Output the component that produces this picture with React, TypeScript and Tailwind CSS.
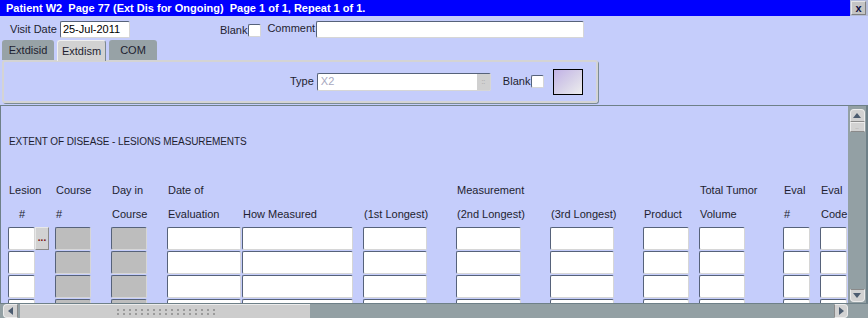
import React from "react";

const font = { fontFamily: '"Liberation Sans", Arial, sans-serif' };

type Col = {
  box: string;
  h1: string;
  h2: string;
  h2pad?: string;
  kind: "white" | "gray" | "btn";
};

const cols: Col[] = [
  { box: "ml-[8px] w-[27px]", h1: "Lesion", h2: "#", h2pad: "pl-[11px]", kind: "white" },
  { box: "w-[14px]", h1: "", h2: "", kind: "btn" },
  { box: "ml-[6px] w-[36px]", h1: "Course", h2: "#", kind: "gray" },
  { box: "ml-[20px] w-[36px]", h1: "Day in", h2: "Course", kind: "gray" },
  { box: "ml-[20px] w-[74px]", h1: "Date of", h2: "Evaluation", kind: "white" },
  { box: "ml-[1px] w-[111px]", h1: "", h2: "How Measured", kind: "white" },
  { box: "ml-[10px] w-[64px]", h1: "", h2: "(1st Longest)", kind: "white" },
  { box: "ml-[29px] w-[65px]", h1: "Measurement", h2: "(2nd Longest)", kind: "white" },
  { box: "ml-[29px] w-[64px]", h1: "", h2: "(3rd Longest)", kind: "white" },
  { box: "ml-[29px] w-[46px]", h1: "", h2: "Product", kind: "white" },
  { box: "ml-[10px] w-[46px]", h1: "Total Tumor", h2: "Volume", kind: "white" },
  { box: "ml-[38px] w-[27px]", h1: "Eval", h2: "#", kind: "white" },
  { box: "ml-[10px] w-[27px]", h1: "Eval", h2: "Code", kind: "white" },
];

const sunken =
  "border border-t-[#56627a] border-l-[#56627a] border-b-[#d6d6d6] border-r-[#d6d6d6] rounded-[2px]";

function Check() {
  return <div className={"w-[13px] h-[13px] bg-white " + sunken} />;
}

function Cell({ kind, first }: { kind: Col["kind"]; first: boolean }) {
  if (kind === "btn") {
    if (!first) return <div className="h-[23px] mb-[1px]" />;
    return (
      <div className="h-[23px] mb-[1px] bg-[#d2d2d2] border border-[#e8e8e8] border-b-[#8a8a8a] border-r-[#8a8a8a] flex items-center justify-center text-[10px] font-bold text-[#7a1010] leading-none pb-[2px]">
        ...
      </div>
    );
  }
  if (kind === "gray") {
    return <div className={"h-[23px] mb-[1px] bg-[#bdbdbd] " + sunken} />;
  }
  return <div className={"h-[23px] mb-[1px] bg-white " + sunken} />;
}

export default function App() {
  return (
    <div style={font} className="w-[868px] h-[318px] overflow-hidden bg-[#c5cdfb] text-[11px] text-[#1e1e30] flex flex-col relative">
      {/* title bar */}
      <div className="h-[16px] flex shrink-0">
        <div className="flex-1 bg-[#0000ff] text-white font-bold text-[11px] leading-[16px] pl-[6px] whitespace-pre">
          Patient W2  Page 77 (Ext Dis for Ongoing)  Page 1 of 1, Repeat 1 of 1.
        </div>
        <div className="w-[18px] bg-[#b4bcd8] flex items-start pt-[1px] pl-[1px]">
          <div className="w-[15px] h-[14px] bg-[#c4c4c4] border border-[#e6e6e6] border-b-[#808080] border-r-[#808080] flex items-center justify-center text-[11px] font-bold leading-none text-[#101040]">
            x
          </div>
        </div>
      </div>

      {/* visit date row */}
      <div className="h-[24px] flex items-start pt-[5px] shrink-0">
        <span className="ml-[10px] mt-[2px] leading-[13px]">Visit Date</span>
        <div className={"ml-[3px] w-[70px] h-[17px] bg-white text-black text-[11px] leading-[15px] pl-[2px] " + sunken}>
          25-Jul-2011
        </div>
        <span className="ml-[90px] mt-[3px] leading-[13px]">Blank</span>
        <div className="ml-[1px] mt-[3px]">
          <Check />
        </div>
        <span className="ml-[6px] mt-[1px] leading-[13px]">Comment</span>
        <div className={"ml-[1px] w-[268px] h-[17px] bg-white " + sunken} />
      </div>

      {/* tabs */}
      <div className="h-[20px] flex items-end pl-[2px] shrink-0">
        <div className="w-[52px] h-[20px] bg-[#97a2a6] rounded-t-[3px] flex items-center justify-center leading-none pt-[1px]">
          Extdisid
        </div>
        <div className="ml-[3px] w-[49px] h-[21px] mb-[-1px] bg-[#d2d2d2] border border-b-0 border-[#f0f0f0] border-r-[#7c8890] rounded-t-[3px] flex items-center justify-center leading-none z-10">
          Extdism
        </div>
        <div className="ml-[3px] w-[48px] h-[20px] bg-[#97a2a6] rounded-t-[3px] flex items-center justify-center leading-none pt-[1px]">
          COM
        </div>
      </div>

      {/* tab panel */}
      <div className="ml-[2px] w-[596px] h-[43px] shrink-0 border-2 border-[#d4d4d4] rounded-[3px] shadow-[1px_1px_0_#7c8c94] flex items-center">
        <span className="ml-[286px] leading-[13px]">Type</span>
        <div className={"ml-[3px] w-[174px] h-[18px] bg-white flex items-center " + sunken}>
          <span className="pl-[3px] flex-1 text-[#a8a8c0] leading-none">X2</span>
          <div className="w-[13px] h-[16px] bg-[#d0d0d0] flex items-center justify-center text-[7px] text-[#a0a0a0] leading-none">
            ::
          </div>
        </div>
        <span className="ml-[12px] leading-[13px]">Blank</span>
        <div className="ml-[1px]">
          <Check />
        </div>
        <div className="ml-[9px] w-[30px] h-[26px] border border-black bg-gradient-to-br from-[#c2b2e6] via-[#d6d0e8] to-[#eeeeee]" />
      </div>

      <div className="h-[2px] shrink-0" />
      <div className="h-[1px] bg-[#6e8088] shrink-0" />

      {/* scrolling body */}
      <div className="flex flex-1 min-h-0">
        <div className="flex-1 min-w-0 overflow-hidden border-l border-[#6e8088]">
          <div className="pt-[30px] pl-[8px] leading-[12px] text-[10px] tracking-[-0.1px] whitespace-nowrap">
            EXTENT OF DISEASE - LESIONS MEASUREMENTS
          </div>
          <div className="flex mt-[36px] -ml-[1px]">
            {cols.map((c, i) => (
              <div key={i} className={"shrink-0 flex flex-col " + c.box}>
                <div className="h-[12px] leading-[12px] pl-[1px] whitespace-nowrap">{c.h1}</div>
                <div className={"h-[12px] leading-[12px] mt-[12px] whitespace-nowrap " + (c.h2pad ?? "pl-[1px]")}>{c.h2}</div>
                <div className="mt-[7px]">
                  {[0, 1, 2, 3].map((r) => (
                    <Cell key={r} kind={c.kind} first={r === 0} />
                  ))}
                </div>
              </div>
            ))}
          </div>
        </div>

        {/* vertical scrollbar */}
        <div className="w-[20px] shrink-0 flex">
          <div className="w-[18px] bg-[#93a0a4] flex flex-col items-center pt-[3px] pb-[1px]">
            <div className="w-[15px] h-[13px] bg-[#d2d2d2] rounded-t-[4px] border border-[#ececec] border-b-[#8a8a8a] flex items-center justify-center">
              <svg width="8" height="5" viewBox="0 0 8 5"><path d="M0 5 L4 0 L8 5 Z" fill="#4c5c70" /></svg>
            </div>
            <div className="w-[15px] h-[10px] bg-[#d2d2d2] border border-[#ececec] border-b-[#8a8a8a] flex items-center justify-center text-[6px] text-[#909090] leading-none">
              ..
            </div>
            <div className="flex-1" />
            <div className="w-[15px] h-[13px] bg-[#d2d2d2] rounded-b-[4px] border border-[#ececec] border-t-[#8a8a8a] flex items-center justify-center">
              <svg width="8" height="5" viewBox="0 0 8 5"><path d="M0 0 L4 5 L8 0 Z" fill="#4c5c70" /></svg>
            </div>
          </div>
          <div className="w-[2px] bg-[#6e8088]" />
        </div>
      </div>

      {/* horizontal scrollbar */}
      <div className="h-[15px] shrink-0 flex bg-[#93a0a4] border-t border-[#6e8088]">
        <div className="ml-[3px] w-[15px] h-[14px] bg-[#d2d2d2] rounded-l-[4px] border border-[#ececec] border-r-[#8a8a8a] flex items-center justify-center">
          <svg width="5" height="8" viewBox="0 0 5 8"><path d="M5 0 L0 4 L5 8 Z" fill="#4c5c70" /></svg>
        </div>
        <div className="ml-[2px] w-[290px] h-[14px] bg-[#cdcdcd] border-t border-[#ececec] flex items-center justify-center">
          <div className="w-[100px] h-[8px] bg-[radial-gradient(circle,#9a9a9a_1px,transparent_1.2px)] bg-[length:6px_4px]" />
        </div>
        <div className="flex-1" />
        <div className="w-[14px] h-[14px] bg-[#d2d2d2] rounded-r-[4px] border border-[#ececec] border-l-[#8a8a8a] flex items-center justify-center">
          <svg width="5" height="8" viewBox="0 0 5 8"><path d="M0 0 L5 4 L0 8 Z" fill="#4c5c70" /></svg>
        </div>
        <div className="w-[20px]" />
      </div>
    </div>
  );
}
